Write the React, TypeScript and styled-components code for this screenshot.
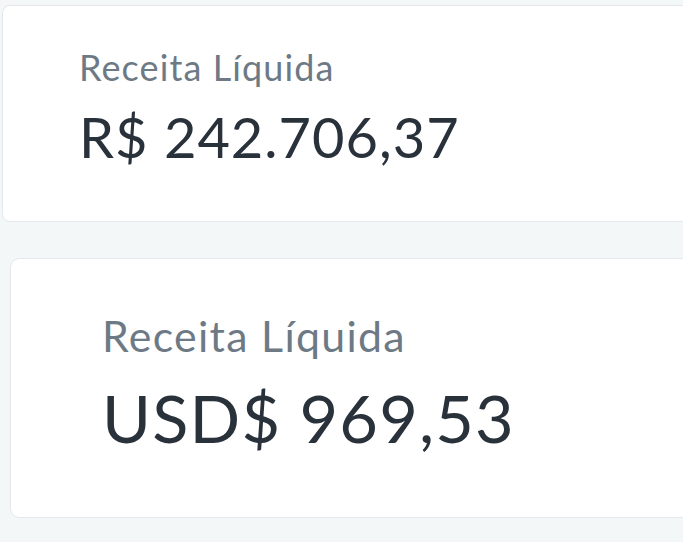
import React from "react";
import styled, { createGlobalStyle } from "styled-components";

const Global = createGlobalStyle`
  html, body { margin: 0; padding: 0; background: #f4f7f8; overflow: hidden; }
  body { font-family: Lato, "Noto Sans", sans-serif; }
`;

const Page = styled.div`
  display: flex;
  flex-direction: column;
  gap: 36px;
  padding-top: 5px;
  width: 683px;
  height: 542px;
  box-sizing: border-box;
  overflow: hidden;
`;

type Size = { $s: number; $left: number; $h: number; $pt: number; $pl: number };

const Card = styled.div<Size>`
  flex: none;
  margin-left: ${(p) => p.$left}px;
  width: 800px;
  height: ${(p) => p.$h}px;
  box-sizing: border-box;
  background: #ffffff;
  border: 1px solid #e4e8eb;
  border-radius: ${(p) => 8 * p.$s}px;
  padding: ${(p) => p.$pt}px 0 0 ${(p) => p.$pl}px;
  display: flex;
  flex-direction: column;
`;

const Label = styled.div<{ $s: number }>`
  font-size: ${(p) => 36 * p.$s}px;
  letter-spacing: ${(p) => 1.1 * p.$s}px;
  line-height: 1.2;
  color: #6d7a85;
  white-space: nowrap;
`;

const Value = styled.div<{ $s: number }>`
  font-size: ${(p) => 56 * p.$s}px;
  letter-spacing: ${(p) => 1 * p.$s}px;
  line-height: 1.2;
  color: #29313a;
  white-space: nowrap;
  margin-top: ${(p) => 14 * p.$s}px;
`;

const stats = [
  { label: "Receita Líquida", value: "R$ 242.706,37", s: 1, left: 2, h: 217, pt: 40, pl: 76 },
  { label: "Receita Líquida", value: "USD$ 969,53", s: 1.19, left: 10, h: 260, pt: 51, pl: 91 },
];

export default function App() {
  return (
    <>
      <Global />
      <Page>
        {stats.map((st, i) => (
          <Card key={i} $s={st.s} $left={st.left} $h={st.h} $pt={st.pt} $pl={st.pl}>
            <Label $s={st.s}>{st.label}</Label>
            <Value $s={st.s}>{st.value}</Value>
          </Card>
        ))}
      </Page>
    </>
  );
}
